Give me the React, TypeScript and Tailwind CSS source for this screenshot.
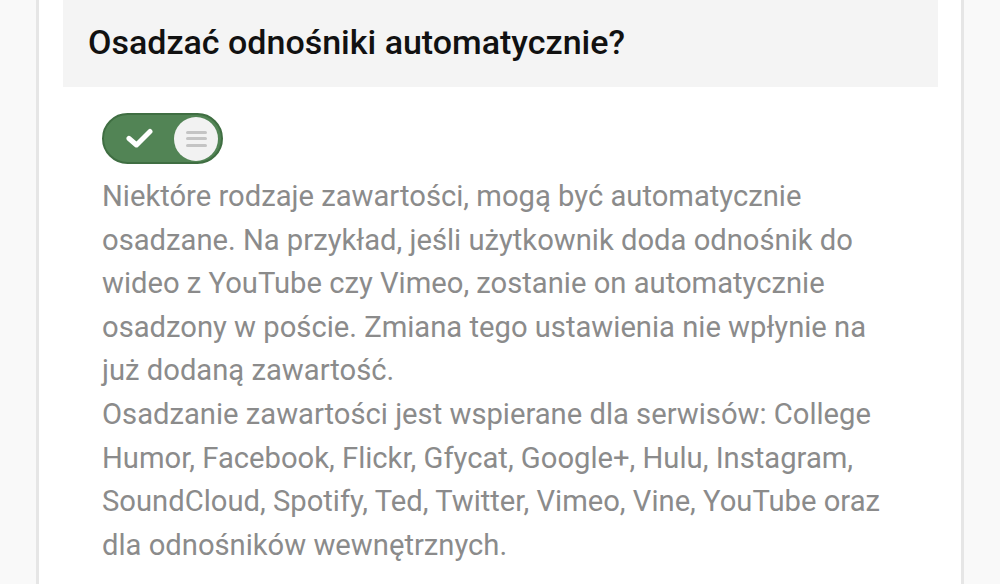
export default function App() {
  const lines1 = [
    "Niektóre rodzaje zawartości, mogą być automatycznie",
    "osadzane. Na przykład, jeśli użytkownik doda odnośnik do",
    "wideo z YouTube czy Vimeo, zostanie on automatycznie",
    "osadzony w poście. Zmiana tego ustawienia nie wpłynie na",
    "już dodaną zawartość.",
  ];
  const lines2 = [
    "Osadzanie zawartości jest wspierane dla serwisów: College",
    "Humor, Facebook, Flickr, Gfycat, Google+, Hulu, Instagram,",
    "SoundCloud, Spotify, Ted, Twitter, Vimeo, Vine, YouTube oraz",
    "dla odnośników wewnętrznych.",
  ];

  return (
    <div className="flex h-[584px] w-[1000px] overflow-hidden bg-[#f9f9f9] font-['Roboto',sans-serif]">
      <div className="w-[36px] shrink-0" />
      <div className="w-[928px] shrink-0 border-x-[3px] border-[#e6e6e6] bg-white pl-[24px] pr-[23px]">
        {/* Section header */}
        <div className="flex h-[87px] items-center bg-[#f4f4f4] px-[25px] pb-[3px]">
          <h2 className="text-[34px] leading-[40px] font-medium text-[#111]">
            Osadzać odnośniki automatycznie?
          </h2>
        </div>

        <div className="px-[39px] pt-[26px]">
          {/* Toggle switch */}
          <div className="flex h-[51px] w-[121px] items-center justify-between rounded-full border-2 border-[#3f6e42] bg-[#528455] pl-[22px] pr-[3px]">
            <svg width="27" height="21" viewBox="0 0 27 21" aria-hidden="true">
              <polyline
                points="3,10.5 10.5,17 24,3.5"
                fill="none"
                stroke="#fff"
                strokeWidth="5"
                strokeLinecap="round"
                strokeLinejoin="round"
              />
            </svg>
            <div className="flex h-[44px] w-[44px] flex-col items-center justify-center gap-[3.5px] rounded-full bg-[#f2f2f2]">
              <span className="h-[3px] w-[21px] rounded-sm bg-[#c4c4c4]" />
              <span className="h-[3px] w-[21px] rounded-sm bg-[#c4c4c4]" />
              <span className="h-[3px] w-[21px] rounded-sm bg-[#c4c4c4]" />
            </div>
          </div>

          <div className="mt-[11px] text-[29.2px] leading-[43.6px] text-[#8b8b8b] whitespace-nowrap">
            <p>
              {lines1.map((l) => (
                <span key={l} className="block">{l}</span>
              ))}
            </p>
            <p>
              {lines2.map((l) => (
                <span key={l} className="block">{l}</span>
              ))}
            </p>
          </div>
        </div>
      </div>
    </div>
  );
}
